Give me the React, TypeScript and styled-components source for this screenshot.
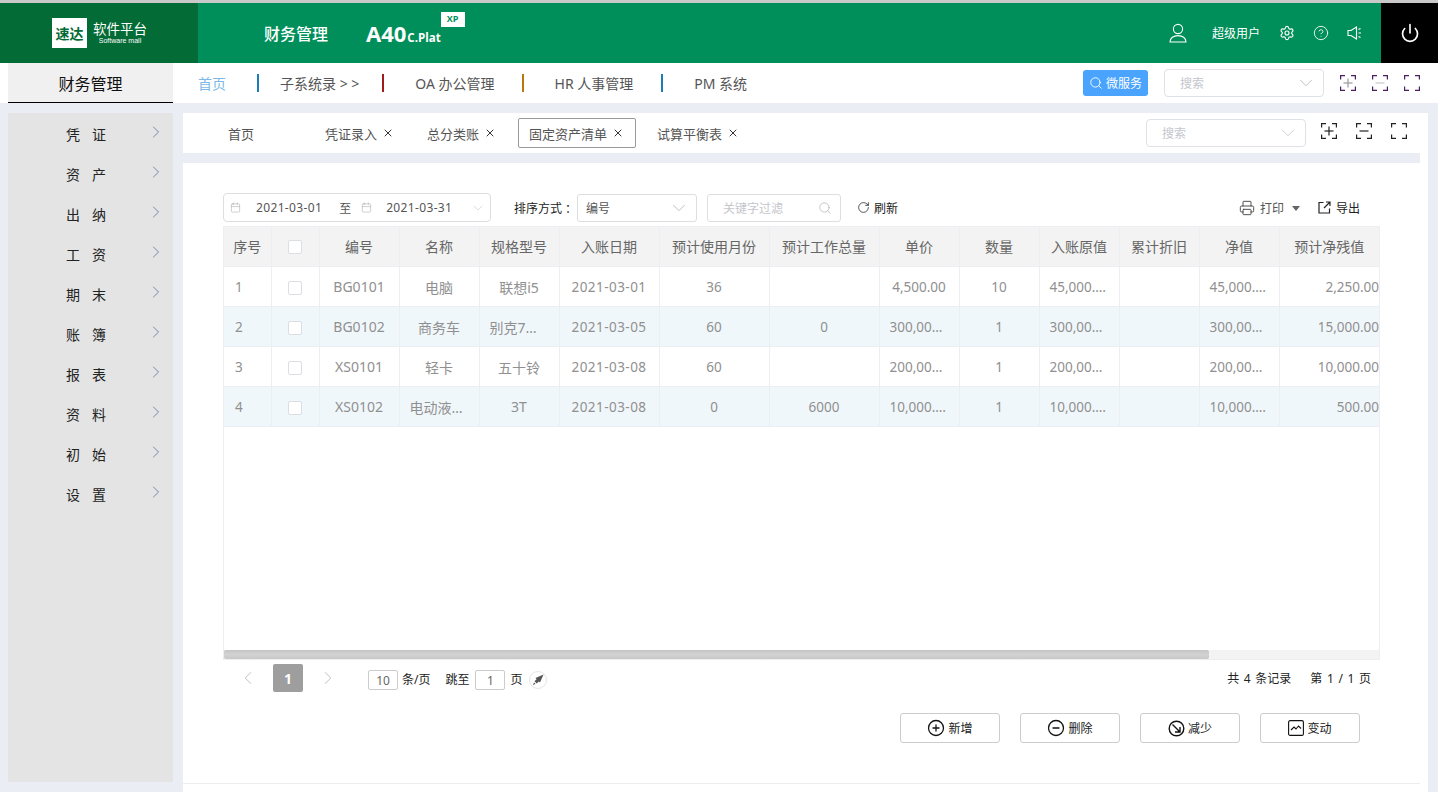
import React from 'react';
import styled, { createGlobalStyle } from 'styled-components';
import {
  Settings,
  CircleHelp,
  Power,
  Search,
  ChevronDown,
  ChevronRight,
  ChevronLeft,
  Printer,
  RotateCw,
  X,
  Calendar,
  CirclePlus,
  CircleMinus,
} from 'lucide-react';

const GlobalStyle = createGlobalStyle`
  html, body {
    margin: 0;
    padding: 0;
    height: 100%;
    background: #eaedf3;
    overflow: hidden;
    font-family: "Noto Sans", "Noto Sans CJK SC", "Liberation Sans", sans-serif;
  }
  * { box-sizing: border-box; }
`;

const Page = styled.div`
  width: 1438px;
  height: 792px;
  display: flex;
  flex-direction: column;
  overflow: hidden;
`;

const TopBar = styled.header`
  height: 63px;
  flex: none;
  display: flex;
  background: #008f5a;
  border-top: 3px solid #c9c9c9;
  color: #fff;
`;

const LogoArea = styled.div`
  width: 198px;
  background: #036b35;
  display: flex;
  align-items: center;
  padding-left: 52px;
  gap: 6px;
`;

const LogoBox = styled.div`
  width: 35px;
  height: 30px;
  background: #fff;
  color: #036b35;
  font-size: 14px;
  font-weight: 700;
  display: flex;
  align-items: center;
  justify-content: center;
  white-space: nowrap;
`;

const LogoText = styled.div`
  display: flex;
  flex-direction: column;
  align-items: center;
  line-height: 1;
`;

const LogoTitle = styled.span`
  font-size: 13.5px;
  line-height: 15px;
`;

const LogoSub = styled.span`
  font-size: 7px;
  line-height: 8px;
  font-family: "Liberation Sans", sans-serif;
`;

const SystemTitle = styled.div`
  margin-left: 66px;
  font-size: 16px;
  font-weight: 500;
  display: flex;
  align-items: center;
`;

const Brand = styled.div`
  margin-left: 38px;
  display: flex;
  align-items: baseline;
  position: relative;
  align-self: center;
  font-family: "Open Sans", sans-serif;
  font-weight: 700;
  gap: 1px;
`;

const BrandBig = styled.span`
  font-size: 22px;
  line-height: 24px;
`;

const BrandSmall = styled.span`
  font-size: 11.5px;
`;

const XpTag = styled.span`
  position: absolute;
  right: -24px;
  top: -9px;
  width: 24px;
  height: 15px;
  background: #fff;
  color: #008f5a;
  font-size: 9px;
  line-height: 14px;
  text-align: center;
`;

const TopRight = styled.div`
  margin-left: auto;
  display: flex;
  align-items: center;
`;

const UserName = styled.span`
  font-size: 12px;
  margin: 0 19px 0 25px;
`;

const TopIcon = styled.span`
  display: flex;
  margin-right: 18px;
`;

const PowerBox = styled.div`
  width: 57px;
  align-self: stretch;
  background: #000;
  margin-left: 19px;
  display: flex;
  align-items: center;
  justify-content: center;
`;

const SubNav = styled.nav`
  height: 40px;
  flex: none;
  background: #fff;
  display: flex;
  align-items: center;
  padding-left: 8px;
  margin-bottom: 10px;
`;

const SystemTab = styled.div`
  width: 165px;
  height: 40px;
  background: #f0f0f0;
  border-bottom: 1px solid #000;
  font-size: 16px;
  color: #111;
  display: flex;
  align-items: center;
  justify-content: center;
  margin-right: 25px;
`;

const NavLink = styled.span<{ $active?: boolean }>`
  font-size: 14px;
  color: ${(p) => (p.$active ? '#7db9e8' : '#555')};
  white-space: nowrap;
`;

const NavSep = styled.i<{ $color: string; $left: number; $right: number }>`
  width: 2px;
  height: 18px;
  background: ${(p) => p.$color};
  margin: 0 ${(p) => p.$right}px 0 ${(p) => p.$left}px;
`;

const NavRight = styled.div`
  margin-left: auto;
  display: flex;
  align-items: center;
  padding-right: 18px;
`;

const ServiceButton = styled.button`
  width: 65px;
  height: 26px;
  background: #4aa3fd;
  border: 0;
  border-radius: 3px;
  color: #fff;
  font: inherit;
  font-size: 12px;
  display: flex;
  align-items: center;
  justify-content: center;
  gap: 3px;
  padding: 0;
  margin-right: 16px;
`;

const SearchSelect = styled.div<{ $gap: number }>`
  width: 160px;
  height: 28px;
  border: 1px solid #dfe1e8;
  border-radius: 4px;
  background: #fff;
  color: #c4c6cc;
  font-size: 12px;
  display: flex;
  align-items: center;
  justify-content: space-between;
  padding: 0 6px 0 15px;
  margin-right: ${(p) => p.$gap}px;
`;

const CornerRow = styled.div<{ $gap: number; $lift?: number }>`
  display: flex;
  gap: ${(p) => p.$gap}px;
  align-items: center;
  margin-bottom: ${(p) => p.$lift || 0}px;
`;

const Body = styled.div`
  flex: 1;
  min-height: 0;
  display: flex;
  padding-left: 8px;
`;

const Sidebar = styled.aside`
  width: 165px;
  height: 669px;
  background: #e4e4e4;
  padding-top: 1px;
  margin-right: 10px;
  flex: none;
`;

const SideItem = styled.div`
  height: 40px;
  display: flex;
  align-items: center;
  position: relative;
  padding-left: 58px;
  font-size: 14px;
  color: #222;
`;

const SideLabel = styled.span`
  display: flex;
  width: 40px;
  justify-content: space-between;
`;

const SideArrow = styled.span`
  position: absolute;
  left: 138px;
  top: 8px;
  display: flex;
  color: #5a74a8;
`;

const Main = styled.main`
  width: 1245px;
  background: #fff;
  padding-right: 8px;
  display: flex;
  flex-direction: column;
`;

const TabBar = styled.div`
  height: 40px;
  flex: none;
  display: flex;
  align-items: center;
  padding-left: 44px;
  padding-right: 13px;
`;

const Tab = styled.div<{ $active?: boolean; $width: number; $left?: number }>`
  width: ${(p) => p.$width}px;
  height: 30px;
  flex: none;
  margin-left: ${(p) => p.$left || 0}px;
  display: flex;
  align-items: center;
  gap: 5px;
  font-size: 13px;
  color: #555;
  white-space: nowrap;
  padding-left: ${(p) => (p.$active ? 10 : 0)}px;
  border: ${(p) => (p.$active ? '1px solid #999' : '1px solid transparent')};
  border-radius: 2px;
`;

const TabRight = styled.div`
  margin-left: auto;
  display: flex;
  align-items: center;
`;

const GapBar = styled.div`
  height: 10px;
  flex: none;
  background: #eaedf3;
`;

const Content = styled.section`
  height: 621px;
  flex: none;
  border-bottom: 1px solid #eceef1;
  padding: 30px 40px 0 40px;
`;

const Toolbar = styled.div`
  height: 29px;
  display: flex;
  align-items: center;
  font-size: 12px;
  color: #555;
  margin-bottom: 4px;
`;

const DateRange = styled.div`
  width: 268px;
  height: 29px;
  border: 1px solid #dcdee2;
  border-radius: 4px;
  display: flex;
  align-items: center;
  padding-left: 6px;
  color: #555;
`;

const DateValue = styled.span<{ $left: number; $right: number }>`
  margin: 0 ${(p) => p.$right}px 0 ${(p) => p.$left}px;
  letter-spacing: 0.35px;
`;

const DateIcon = styled.span`
  display: flex;
  margin-left: 10px;
`;

const DateArrow = styled.span`
  margin-left: auto;
  margin-right: 4px;
  display: flex;
  color: #ccc;
`;

const SortLabel = styled.span`
  margin-left: 23px;
  width: 63px;
  font-size: 12px;
  color: #222;
  white-space: nowrap;
`;

const SortSelect = styled.div`
  width: 120px;
  height: 28px;
  border: 1px solid #dcdee2;
  border-radius: 3px;
  display: flex;
  align-items: center;
  justify-content: space-between;
  padding: 0 6px 0 8px;
  color: #555;
`;

const FilterInput = styled.div`
  width: 134px;
  height: 28px;
  margin-left: 10px;
  border: 1px solid #dcdee2;
  border-radius: 3px;
  display: flex;
  align-items: center;
  justify-content: space-between;
  padding: 0 8px 0 15px;
  color: #c4c6cc;
`;

const RefreshLink = styled.span`
  margin-left: 16px;
  display: flex;
  align-items: center;
  gap: 4px;
  color: #222;
`;

const ToolRight = styled.div`
  margin-left: auto;
  padding-right: 20px;
  display: flex;
  align-items: center;
`;

const PrintLink = styled.span`
  display: flex;
  align-items: center;
  gap: 5px;
  color: #555;
`;

const Caret = styled.i`
  width: 0;
  height: 0;
  margin: 2px 18px 0 8px;
  border: 4px solid transparent;
  border-top: 5px solid #666;
  border-bottom: 0;
`;

const ExportLink = styled.span`
  display: flex;
  align-items: center;
  gap: 5px;
  color: #222;
`;

const TableFrame = styled.div`
  width: 1157px;
  height: 434px;
  border: 1px solid #eceef1;
  border-top: 0;
  display: flex;
  flex-direction: column;
`;

const TableBody = styled.div`
  flex: 1;
  min-height: 0;
`;

const DataTable = styled.table`
  table-layout: fixed;
  width: 1155px;
  border-collapse: collapse;
  font-size: 14px;
  color: #909090;
`;

const HeadCell = styled.th`
  height: 40px;
  background: #f3f3f3;
  border: 1px solid #eceef1;
  font-weight: 400;
  color: #666;
  padding: 0 0 2px;
  text-align: center;
  white-space: nowrap;
  &:first-child { border-left: 0; }
  &:last-child { border-right: 0; }
`;

const Row = styled.tr<{ $alt?: boolean }>`
  background: ${(p) => (p.$alt ? '#f0f7fb' : '#fff')};
`;

const Cell = styled.td<{ $align?: string; $num?: boolean; $date?: boolean }>`
  height: 40px;
  border: 1px solid #eceef1;
  padding: ${(p) => (p.$align === 'left' ? '0 0 0 11px' : p.$align === 'right' ? '0' : '0 10px')};
  text-align: ${(p) => p.$align || 'center'};
  font-size: ${(p) => (p.$num || p.$date ? '13.5px' : '14px')};
  letter-spacing: ${(p) => (p.$date ? '0.45px' : '0')};
  white-space: nowrap;
  overflow: hidden;
  text-overflow: ellipsis;
  &:first-child { border-left: 0; }
  &:last-child { border-right: 0; }
`;

const Check = styled.span`
  display: inline-block;
  width: 14px;
  height: 14px;
  background: #fff;
  border: 1px solid #dcdee2;
  border-radius: 2px;
  vertical-align: middle;
`;

const ScrollTrack = styled.div`
  height: 9px;
  flex: none;
  background: #f3f3f3;
`;

const ScrollThumb = styled.div`
  width: 985px;
  height: 9px;
  border-radius: 2px;
  background: linear-gradient(#c4c4c4, #d2d2d2 50%, #c8c8c8);
`;

const Pager = styled.div`
  height: 28px;
  margin-top: 4px;
  display: flex;
  align-items: center;
  font-size: 12px;
  color: #222;
  padding-left: 14px;
`;

const PageArrow = styled.span<{ $left: number; $right: number }>`
  display: flex;
  color: #bbb;
  margin: 0 ${(p) => p.$right}px 0 ${(p) => p.$left}px;
`;

const PageNum = styled.span`
  width: 30px;
  height: 28px;
  background: #9e9e9e;
  color: #fff;
  border-radius: 2px;
  font-weight: 700;
  font-size: 14px;
  display: flex;
  align-items: center;
  justify-content: center;
`;

const PageInput = styled.span<{ $left: number }>`
  width: 30px;
  height: 20px;
  margin: 4px 4px 0 ${(p) => p.$left}px;
  border: 1px solid #ccc;
  border-radius: 2px;
  color: #666;
  display: flex;
  align-items: center;
  justify-content: center;
`;

const PageText = styled.span<{ $left?: number }>`
  margin-top: 2px;
  margin-left: ${(p) => p.$left || 0}px;
`;

const Rocket = styled.span`
  width: 18px;
  height: 18px;
  margin: 4px 0 0 6px;
  border: 1px solid #e5e5e5;
  border-radius: 50%;
  display: flex;
  align-items: center;
  justify-content: center;
`;

const PagerRight = styled.div`
  margin-left: auto;
  margin-right: 9px;
  display: flex;
  gap: 19px;
  word-spacing: 1.5px;
`;

const Actions = styled.div`
  display: flex;
  justify-content: flex-end;
  gap: 20px;
  margin-top: 21px;
  padding-right: 20px;
`;

const ActionButton = styled.button`
  width: 100px;
  height: 30px;
  background: #fff;
  border: 1px solid #ccc;
  border-radius: 3px;
  font: inherit;
  font-size: 12px;
  color: #222;
  padding: 0;
  display: flex;
  align-items: center;
  justify-content: center;
  gap: 3px;
`;

const CornerIcon: React.FC<{ mark?: 'plus' | 'minus'; color?: string; markColor?: string }> = ({
  mark,
  color = '#222',
  markColor = '#222',
}) => (
  <svg width="16" height="16" viewBox="0 0 16 16" fill="none" stroke={color} strokeWidth="1.2">
    <path d="M.6 4.5V.6h4.4M11 .6h4.4v3.9M15.4 11.5v3.9H11M5 15.4H.6v-3.9" />
    {mark && <path d="M3.5 8h9" stroke={markColor} />}
    {mark === 'plus' && <path d="M8 3.5v9" stroke={markColor} />}
  </svg>
);

const UserIcon = () => (
  <svg width="18" height="20" viewBox="0 0 18 20" fill="none" stroke="#fff" strokeWidth="1.1">
    <circle cx="9" cy="6" r="4.6" />
    <path d="M1 19c0-4 3.6-6.4 8-6.4s8 2.4 8 6.4z" />
  </svg>
);

const SpeakerIcon = () => (
  <svg width="15" height="16" viewBox="0 0 15 16" fill="none" stroke="#fff" strokeWidth="1.1">
    <path d="M1 5.5h3L9.5 2v12L4 10.5H1z" />
    <path d="M11.5 4.5l2-1M11.5 8h2.5M11.5 11.5l2 1" />
  </svg>
);

const LaunchIcon = () => (
  <svg width="12" height="12" viewBox="0 0 12 12" fill="#555">
    <path d="M11.5.5 8 8.5 6.8 7.4 4.7 9.5 2.5 7.3l2.1-2.1L3.5 4z" />
    <path d="M2 8.5 3.5 10 1 11z" />
  </svg>
);

const ExportIcon = () => (
  <svg width="13" height="13" viewBox="0 0 13 13" fill="none" stroke="#222" strokeWidth="1.2">
    <path d="M5.5 1.5H1v10.5h10.5V7.5" />
    <path d="M6 7l5.5-5.5M8 1h4v4" />
  </svg>
);

const ReduceIcon = () => (
  <svg width="17" height="17" viewBox="0 0 17 17" fill="none" stroke="#111" strokeWidth="1.4">
    <circle cx="8.5" cy="8.5" r="7.3" />
    <path d="M4.5 4.5l7 7M7 12h5V7" />
  </svg>
);

const TrendIcon = () => (
  <svg width="16" height="16" viewBox="0 0 16 16" fill="none" stroke="#111" strokeWidth="1.1">
    <rect x="0.6" y="0.6" width="14.8" height="14.8" rx="1.5" />
    <path d="M3 10l3-3 2 2 2.5-3L13 8.5" />
  </svg>
);

const sideItems = [
  ['凭', '证'],
  ['资', '产'],
  ['出', '纳'],
  ['工', '资'],
  ['期', '末'],
  ['账', '簿'],
  ['报', '表'],
  ['资', '料'],
  ['初', '始'],
  ['设', '置'],
];

const columns = [
  { title: '序号', width: 47 },
  { title: '', width: 48 },
  { title: '编号', width: 80 },
  { title: '名称', width: 80 },
  { title: '规格型号', width: 80 },
  { title: '入账日期', width: 100 },
  { title: '预计使用月份', width: 110 },
  { title: '预计工作总量', width: 110 },
  { title: '单价', width: 80 },
  { title: '数量', width: 80 },
  { title: '入账原值', width: 80 },
  { title: '累计折旧', width: 80 },
  { title: '净值', width: 80 },
  { title: '预计净残值', width: 100 },
];

const rows = [
  ['1', 'BG0101', '电脑', '联想i5', '2021-03-01', '36', '', '4,500.00', '10', '45,000.00', '', '45,000.00', '2,250.00'],
  ['2', 'BG0102', '商务车', '别克7座商务', '2021-03-05', '60', '0', '300,000.00', '1', '300,000.00', '', '300,000.00', '15,000.00'],
  ['3', 'XS0101', '轻卡', '五十铃', '2021-03-08', '60', '', '200,000.00', '1', '200,000.00', '', '200,000.00', '10,000.00'],
  ['4', 'XS0102', '电动液压车', '3T', '2021-03-08', '0', '6000', '10,000.00', '1', '10,000.00', '', '10,000.00', '500.00'],
];

const App: React.FC = () => {
  return (
    <Page>
      <GlobalStyle />
      <TopBar>
        <LogoArea>
          <LogoBox>速达</LogoBox>
          <LogoText>
            <LogoTitle>软件平台</LogoTitle>
            <LogoSub>Software mall</LogoSub>
          </LogoText>
        </LogoArea>
        <SystemTitle>财务管理</SystemTitle>
        <Brand>
          <BrandBig>A40</BrandBig>
          <BrandSmall>C.Plat</BrandSmall>
          <XpTag>XP</XpTag>
        </Brand>
        <TopRight>
          <UserIcon />
          <UserName>超级用户</UserName>
          <TopIcon>
            <Settings size={16} strokeWidth={1.7} />
          </TopIcon>
          <TopIcon>
            <CircleHelp size={16} strokeWidth={1.3} />
          </TopIcon>
          <SpeakerIcon />
          <PowerBox>
            <Power size={20} strokeWidth={2} />
          </PowerBox>
        </TopRight>
      </TopBar>

      <SubNav>
        <SystemTab>财务管理</SystemTab>
        <NavLink $active>首页</NavLink>
        <NavSep $color="#1a7db5" $left={31} $right={21} />
        <NavLink>子系统录 &gt; &gt;</NavLink>
        <NavSep $color="#a01c1c" $left={23} $right={31} />
        <NavLink>OA 办公管理</NavLink>
        <NavSep $color="#b9770e" $left={27} $right={31} />
        <NavLink>HR 人事管理</NavLink>
        <NavSep $color="#1a7db5" $left={28} $right={31} />
        <NavLink>PM 系统</NavLink>
        <NavRight>
          <ServiceButton>
            <Search size={14} strokeWidth={1.6} />
            微服务
          </ServiceButton>
          <SearchSelect $gap={16}>
            搜索
            <ChevronDown size={22} strokeWidth={1} color="#bbb" />
          </SearchSelect>
          <CornerRow $gap={16}>
            <CornerIcon mark="plus" color="#4a1f5e" markColor="#9a9a9a" />
            <CornerIcon mark="minus" color="#4a1f5e" markColor="#c8c8c8" />
            <CornerIcon color="#4a1f5e" />
          </CornerRow>
        </NavRight>
      </SubNav>

      <Body>
        <Sidebar>
          {sideItems.map(([a, b]) => (
            <SideItem key={a + b}>
              <SideLabel>
                <span>{a}</span>
                <span>{b}</span>
              </SideLabel>
              <SideArrow>
                <ChevronRight size={20} strokeWidth={1} />
              </SideArrow>
            </SideItem>
          ))}
        </Sidebar>

        <Main>
          <TabBar>
            <Tab $width={97}>首页</Tab>
            <Tab $width={102}>
              凭证录入
              <X size={12} strokeWidth={2} color="#333" />
            </Tab>
            <Tab $width={92}>
              总分类账
              <X size={12} strokeWidth={2} color="#333" />
            </Tab>
            <Tab $active $width={118}>
              固定资产清单
              <X size={12} strokeWidth={2} color="#333" />
            </Tab>
            <Tab $width={100} $left={20}>
              试算平衡表
              <X size={12} strokeWidth={2} color="#333" />
            </Tab>
            <TabRight>
              <SearchSelect $gap={15}>
                搜索
                <ChevronDown size={22} strokeWidth={1} color="#ccc" />
              </SearchSelect>
              <CornerRow $gap={19} $lift={4}>
                <CornerIcon mark="plus" />
                <CornerIcon mark="minus" />
                <CornerIcon />
              </CornerRow>
            </TabRight>
          </TabBar>
          <GapBar />
          <Content>
            <Toolbar>
              <DateRange>
                <Calendar size={11} strokeWidth={1.2} color="#aaa" />
                <DateValue $left={15} $right={17}>2021-03-01</DateValue>
                至
                <DateIcon>
                  <Calendar size={11} strokeWidth={1.2} color="#aaa" />
                </DateIcon>
                <DateValue $left={14} $right={0}>2021-03-31</DateValue>
                <DateArrow>
                  <ChevronDown size={16} strokeWidth={1} />
                </DateArrow>
              </DateRange>
              <SortLabel>排序方式 ：</SortLabel>
              <SortSelect>
                编号
                <ChevronDown size={22} strokeWidth={1} color="#bbb" />
              </SortSelect>
              <FilterInput>
                关键字过滤
                <Search size={14} strokeWidth={1.1} color="#aaa" />
              </FilterInput>
              <RefreshLink>
                <RotateCw size={13} strokeWidth={1.4} />
                刷新
              </RefreshLink>
              <ToolRight>
                <PrintLink>
                  <Printer size={16} strokeWidth={1.4} color="#444" />
                  打印
                </PrintLink>
                <Caret />
                <ExportLink>
                  <ExportIcon />
                  导出
                </ExportLink>
              </ToolRight>
            </Toolbar>

            <TableFrame>
              <TableBody>
                <DataTable>
                  <colgroup>
                    {columns.map((c, i) => (
                      <col key={i} width={c.width} />
                    ))}
                  </colgroup>
                  <thead>
                    <tr>
                      {columns.map((c, i) => (
                        <HeadCell key={i}>{i === 1 ? <Check /> : c.title}</HeadCell>
                      ))}
                    </tr>
                  </thead>
                  <tbody>
                    {rows.map((r, i) => (
                      <Row key={r[0]} $alt={i % 2 === 1}>
                        <Cell $align="left" $num>{r[0]}</Cell>
                        <Cell>
                          <Check />
                        </Cell>
                        <Cell>{r[1]}</Cell>
                        <Cell>{r[2]}</Cell>
                        <Cell>{r[3]}</Cell>
                        <Cell $date>{r[4]}</Cell>
                        <Cell $num>{r[5]}</Cell>
                        <Cell $num>{r[6]}</Cell>
                        <Cell $num>{r[7]}</Cell>
                        <Cell $num>{r[8]}</Cell>
                        <Cell $num>{r[9]}</Cell>
                        <Cell $num>{r[10]}</Cell>
                        <Cell $num>{r[11]}</Cell>
                        <Cell $align="right" $num>{r[12]}</Cell>
                      </Row>
                    ))}
                  </tbody>
                </DataTable>
              </TableBody>
              <ScrollTrack>
                <ScrollThumb />
              </ScrollTrack>
            </TableFrame>

            <Pager>
              <PageArrow $left={0} $right={14}>
                <ChevronLeft size={22} strokeWidth={1} />
              </PageArrow>
              <PageNum>1</PageNum>
              <PageArrow $left={14} $right={0}>
                <ChevronRight size={22} strokeWidth={1} />
              </PageArrow>
              <PageInput $left={29}>10</PageInput>
              <PageText>条/页</PageText>
              <PageText $left={15}>跳至</PageText>
              <PageInput $left={6}>1</PageInput>
              <PageText $left={1}>页</PageText>
              <Rocket>
                <LaunchIcon />
              </Rocket>
              <PagerRight>
                <span>共 4 条记录</span>
                <span>第 1 / 1 页</span>
              </PagerRight>
            </Pager>

            <Actions>
              <ActionButton>
                <CirclePlus size={18} strokeWidth={1.7} color="#111" />
                新增
              </ActionButton>
              <ActionButton>
                <CircleMinus size={18} strokeWidth={1.7} color="#111" />
                删除
              </ActionButton>
              <ActionButton>
                <ReduceIcon />
                减少
              </ActionButton>
              <ActionButton>
                <TrendIcon />
                变动
              </ActionButton>
            </Actions>
          </Content>
        </Main>
      </Body>
    </Page>
  );
};

export default App;
